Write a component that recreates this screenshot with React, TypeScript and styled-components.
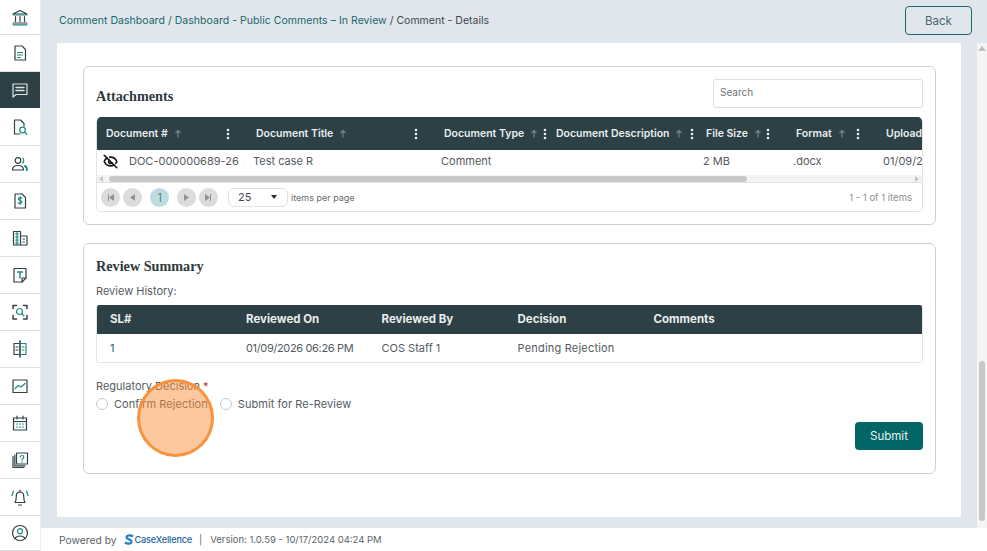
import React from "react";
import styled, { createGlobalStyle } from "styled-components";
import { EyeOff } from "lucide-react";

const Global = createGlobalStyle`
  html, body { margin: 0; padding: 0; height: 100%; overflow: hidden; background: #e1e6ed; }
  * { box-sizing: border-box; }
  body { font-family: Inter, "Noto Sans", "Liberation Sans", sans-serif; color: #4c5358; }
`;

const Page = styled.div`
  display: flex;
  width: 987px;
  height: 551px;
  position: relative;
  overflow: hidden;
`;
const Sidebar = styled.nav`
  width: 41px;
  flex: none;
  background: #fff;
  border-right: 1px solid #e9edf2;
  display: flex;
  flex-direction: column;
`;
const NavItem = styled.div<{ $active?: boolean; $h: number }>`
  height: ${(p) => p.$h}px;
  flex: none;
  display: flex;
  align-items: center;
  justify-content: center;
  background: ${(p) => (p.$active ? "#2d4045" : "#fff")};
  border-bottom: 1px solid ${(p) => (p.$active ? "#2d4045" : "#dcdfe2")};
`;
const Right = styled.div`
  flex: 1;
  min-width: 0;
  display: flex;
  flex-direction: column;
`;
const Header = styled.header`
  height: 43px;
  flex: none;
  display: flex;
  align-items: flex-start;
  justify-content: space-between;
  padding: 6px 15px 0 18px;
  background: #e1e6ed;
`;
const Crumbs = styled.div`
  font-size: 10.5px;
  line-height: 29px;
  color: #3f474e;
`;
const Crumb = styled.span`
  color: #17666a;
  letter-spacing: 0.04px;
`;
const BackButton = styled.button`
  width: 67px;
  height: 29px;
  font: inherit;
  font-size: 11.5px;
  color: #47686e;
  background: transparent;
  border: 1px solid #1c666c;
  border-radius: 4px;
  padding: 0;
`;
const Middle = styled.div`
  flex: 1;
  min-height: 0;
  display: flex;
  background: #e1e6ed;
`;
const Gutter = styled.div`
  flex: 1;
  min-width: 0;
  padding: 0 16px 11px 16px;
`;
const Panel = styled.main`
  height: 474px;
  background: #fff;
  padding: 23px 25px 0 26px;
  display: flex;
  flex-direction: column;
  gap: 18px;
`;
const ScrollTrack = styled.div`
  width: 10px;
  flex: none;
  background: #f5f5f5;
  display: flex;
  flex-direction: column;
  align-items: center;
  padding-top: 3px;
`;
const ScrollUp = styled.div`
  width: 0;
  height: 0;
  border-left: 4px solid transparent;
  border-right: 4px solid transparent;
  border-bottom: 5px solid #bdbdbd;
`;
const ScrollThumb = styled.div`
  width: 6px;
  height: 160px;
  margin-top: 310px;
  border-radius: 3px;
  background: #c8c8c8;
`;
const Card = styled.section<{ $h: number }>`
  height: ${(p) => p.$h}px;
  border: 1px solid #cfd2d4;
  border-radius: 6px;
  padding: 12px 12px 0 12px;
  flex: none;
`;
const CardTop = styled.div`
  display: flex;
  align-items: center;
  justify-content: space-between;
  margin-bottom: 9px;
`;
const Title = styled.h2<{ $drop?: number }>`
  margin: ${(p) => p.$drop ?? 0}px 0 0;
  font-family: "Liberation Serif", "DejaVu Serif", serif;
  font-weight: 700;
  font-size: 14.2px;
  line-height: 20px;
  color: #2e3a3e;
`;
const SearchBox = styled.input`
  width: 210px;
  height: 29px;
  border: 1px solid #dcdfe2;
  border-radius: 3px;
  font: inherit;
  font-size: 10px;
  padding: 0 6px 4px;
  background: #fff;
  &::placeholder { color: #6f7478; opacity: 1; }
`;
const GridWrap = styled.div`
  height: 95px;
  border: 1px solid #e1e4e6;
  border-top: 0;
  border-radius: 5px;
  overflow: hidden;
  display: flex;
  flex-direction: column;
`;
const GridHead = styled.div`
  height: 33px;
  flex: none;
  background: #2d4045;
  display: flex;
  color: #e8eeee;
  font-size: 10.5px;
  font-weight: 600;
`;
const HeadCell = styled.div<{ $w: number; $pr: number }>`
  width: ${(p) => p.$w}px;
  flex: none;
  display: flex;
  align-items: center;
  white-space: nowrap;
  padding-left: 9px;
  padding-right: ${(p) => p.$pr}px;
`;
const SortMark = styled.svg`
  width: 8px;
  height: 9px;
  margin-left: 6px;
  flex: none;
`;
const KebabMark = styled.svg`
  width: 4px;
  height: 12px;
  margin-left: auto;
  flex: none;
`;
const GridRow = styled.div`
  height: 25px;
  flex: none;
  display: flex;
  padding-bottom: 3px;
  font-size: 11px;
  color: #555b60;
`;
const RowCell = styled.div<{ $w: number }>`
  width: ${(p) => p.$w}px;
  flex: none;
  display: flex;
  align-items: center;
  white-space: nowrap;
  padding-left: 6px;
  gap: 11px;
`;
const HBar = styled.div`
  height: 8px;
  flex: none;
  background: #f3f3f3;
  border-bottom: 1px solid #dfe2e4;
  display: flex;
  align-items: center;
  justify-content: space-between;
  padding: 0 2px;
`;
const HThumb = styled.div`
  width: 638px;
  height: 6px;
  margin-left: 1px;
  margin-right: auto;
  border-radius: 3px;
  background: #c8c8c8;
`;
const Tri = styled.div<{ $dir: "l" | "r" }>`
  width: 0;
  height: 0;
  border-top: 3px solid transparent;
  border-bottom: 3px solid transparent;
  ${(p) => (p.$dir === "l" ? "border-right: 4px solid #c4c4c4; margin-right: 5px;" : "border-left: 4px solid #c4c4c4; margin-right: 1px;")}
`;
const Pager = styled.div`
  flex: 1;
  display: flex;
  align-items: center;
  padding: 0 10px 0 4px;
  gap: 3px;
  font-size: 9.5px;
  color: #666c70;
`;
const PageBtn = styled.div<{ $active?: boolean; $ml?: number }>`
  width: 19px;
  height: 19px;
  border-radius: 50%;
  margin-left: ${(p) => p.$ml ?? 0}px;
  background: ${(p) => (p.$active ? "#bcdcdf" : "#dcdcdc")};
  color: #4d6a70;
  font-size: 12px;
  font-weight: 300;
  display: flex;
  align-items: center;
  justify-content: center;
  flex: none;
`;
const PageGlyph = styled.svg`
  width: 7px;
  height: 7px;
`;
const PageSelect = styled.div`
  width: 60px;
  height: 19px;
  margin-left: 7px;
  border: 1px solid #dfe1e3;
  border-radius: 6px;
  display: flex;
  align-items: center;
  justify-content: space-between;
  padding: 0 10px 0 9px;
  font-size: 11px;
  color: #3f4548;
  flex: none;
`;
const SelectArrow = styled.div`
  width: 0;
  height: 0;
  border-left: 3.5px solid transparent;
  border-right: 3.5px solid transparent;
  border-top: 4px solid #2a2f33;
`;
const PerPage = styled.span`
  font-size: 9px;
`;
const PageCount = styled.span`
  margin-left: auto;
  color: #8b9094;
  font-size: 9.5px;
`;
const Small = styled.div`
  font-size: 11px;
  line-height: 14px;
  color: #565c61;
`;
const HistoryLabel = styled(Small)`
  margin-top: 8px;
`;
const History = styled.div`
  margin-top: 7px;
  height: 58px;
  border: 1px solid #e3e5e7;
  border-top: 0;
  border-radius: 3px;
  overflow: hidden;
`;
const HistoryHead = styled.div`
  height: 29px;
  padding-bottom: 1px;
  background: #2d4045;
  display: grid;
  grid-template-columns: 136px 135.5px 136px 136px 1fr;
  align-items: center;
  color: #e8eeee;
  font-size: 11.5px;
  font-weight: 700;
`;
const HistoryRow = styled.div`
  height: 29px;
  padding-bottom: 2px;
  display: grid;
  grid-template-columns: 136px 135.5px 136px 136px 1fr;
  align-items: center;
  font-size: 11px;
  color: #555b60;
`;
const HCell = styled.div<{ $track?: number }>`
  padding-left: 13px;
  white-space: nowrap;
  letter-spacing: ${(p) => p.$track ?? 0}px;
`;
const LinkCell = styled(HCell)`
  color: #17666a;
`;
const DecisionLabel = styled(Small)`
  margin-top: 16px;
`;
const Required = styled.span`
  color: #c0392b;
`;
const Radios = styled.div`
  margin-top: 4px;
  display: flex;
  align-items: center;
  height: 14px;
`;
const Radio = styled.span`
  width: 12px;
  height: 12px;
  border: 1px solid #c9cccf;
  border-radius: 50%;
  background: #fff;
  flex: none;
  margin-right: 6px;
`;
const RadioText = styled.span`
  font-size: 11px;
  letter-spacing: 0.05px;
  color: #565c61;
  margin-right: 12px;
  white-space: nowrap;
`;
const Actions = styled.div`
  margin-top: 11px;
  display: flex;
  justify-content: flex-end;
`;
const Submit = styled.button`
  width: 68px;
  height: 28px;
  border: 0;
  border-radius: 4px;
  background: #046566;
  color: #e9f4f4;
  font: inherit;
  font-size: 11.5px;
  padding: 0;
`;
const Footer = styled.footer`
  height: 23px;
  flex: none;
  background: #fff;
  display: flex;
  align-items: center;
  padding-left: 18px;
  font-size: 9.5px;
  color: #5c6266;
`;
const Powered = styled.span`
  font-size: 10.3px;
`;
const Logo = styled.span`
  display: inline-flex;
  align-items: center;
  margin: 0 7px;
  color: #1d5fa6;
  font-weight: 500;
  font-size: 9.2px;
  letter-spacing: -0.2px;
`;
const LogoMark = styled.svg`
  width: 10px;
  height: 11px;
  margin-right: 1px;
`;
const Sep = styled.span`
  margin-right: 8px;
`;
const Spot = styled.div`
  position: absolute;
  left: 137px;
  top: 379px;
  width: 77px;
  height: 78px;
  border-radius: 50%;
  background: rgba(251, 146, 60, 0.5);
  border: 3px solid #f8923c;
`;

const D = "#2f4247";
const T = "#1f8a80";

const Ico: React.FC<{ children: React.ReactNode }> = ({ children }) => (
  <svg width="20" height="20" viewBox="0 0 20 20" fill="none" stroke={D} strokeWidth="1.2" strokeLinecap="round" strokeLinejoin="round">
    {children}
  </svg>
);

const icons: React.ReactNode[] = [
  <Ico key="a"><path d="M3 7 10 3.5 17 7Z" /><path d="M3 8h14" stroke={T} /><path d="M5.5 9.5v5M10 9.5v5M14.5 9.5v5" /><path d="M3 16h14" /><path d="M3 17.8h14" stroke={T} /></Ico>,
  <Ico key="b"><path d="M5 3h7l3.5 3.5V17H5Z" /><path d="M7.5 9.500h5M7.500 12h5" stroke={T} /><path d="M7.500 14.500h3" stroke={T} /></Ico>,
  <Ico key="c"><g stroke="#dfe6e6"><path d="M3 4h14v10.500H6L3 17Z" /><path d="M6 7.500h8M6 10.500h8" strokeWidth="1.600" /></g></Ico>,
  <Ico key="d"><path d="M10 17H4.500V3h6l3.500 3.500V9" /><circle cx="12.500" cy="13" r="2.800" stroke={T} /><path d="m14.600 15 2.400 2.400" stroke={T} /></Ico>,
  <Ico key="e"><circle cx="8" cy="6.500" r="2.800" /><path d="M2.500 16c0-3 2.500-4.500 5.500-4.500s5.500 1.500 5.500 4.500Z" /><path d="M12.500 4c1.600.5 1.600 4.500 0 5" stroke={T} /><path d="M15 12c1.200.6 2 2 2 4" stroke={T} strokeWidth="2" /></Ico>,
  <Ico key="f"><path d="M5 3h7l3.500 3.500V17H5Z" /><path d="M12 7.200c-.5-1-3.600-1-3.600.7 0 2 3.600 1.200 3.600 3.200 0 1.700-3.200 1.700-3.800.6M10.200 5.500v8" stroke={T} /></Ico>,
  <Ico key="g"><path d="M3.500 17V3.500h7V17M10.500 8h6.500v9H3.500" /><path d="M5.500 6h3M5.500 9h3M5.500 12h3M5.500 15h3M7 4v13" stroke={T} /><path d="M13 11h1.500M13 14h1.500" /></Ico>,
  <Ico key="h"><path d="M4 3.500h12V13l-4 4H4Z" /><path d="M12 17v-4h4" /><path d="M7.500 7h5M10 7v6" stroke={T} strokeWidth="1.400" /></Ico>,
  <Ico key="i"><path d="M3 6.500V3.500h3.500M13.500 3.500H17v3M17 13.500V17h-3.500M6.500 17H3v-3.500" strokeWidth="1.500" /><circle cx="9.500" cy="9.500" r="3" stroke={T} /><path d="m11.700 11.700 2.300 2.300" stroke={T} /></Ico>,
  <Ico key="j"><path d="M10 2v16" strokeWidth="1.600" /><path d="M10 4.500H4v11h6M6 8h2M6 11h2" /><path d="M10 4.500h6v11h-6M12 8h2M12 11h2" stroke={T} /></Ico>,
  <Ico key="k"><path d="M3 4h14v12.500H3Z" /><path d="m5 12.500 3.500-3 2.500 1.500 4-3.500" stroke={T} /></Ico>,
  <Ico key="l"><path d="M3.500 5h13v12h-13Z" /><path d="M3.500 8.500h13M7 3v3M13 3v3" /><path d="M6.500 11h1M9.500 11h1M12.500 11h1M6.500 14h1M9.500 14h1M12.500 14h1" stroke={T} /></Ico>,
  <Ico key="m"><path d="M6.500 3h11v11h-11Z" /><path d="M3 6.500V17.500h11" /><path d="M4.800 5v10.800H15" /><path d="M10.200 7c.2-2 3.600-2 3.600 0 0 1.500-1.800 1.500-1.800 3M12 11.800v.4" stroke={T} /></Ico>,
  <Ico key="n"><path d="M5 15.500c1-1.500 1.300-3 1.300-6.500 0-2.500 1.500-4 3.700-4s3.700 1.500 3.700 4c0 3.500.3 5 1.300 6.500Z" /><path d="M8.500 18h3" /><path d="M10 3v2" /><path d="M3.500 4 2 8.500M16.500 4 18 8.500" stroke={T} /></Ico>,
  <Ico key="o"><circle cx="10" cy="10" r="7.500" /><circle cx="10" cy="8.200" r="2.500" stroke={T} /><path d="M5 15.500c1-2 3-2.500 5-2.500s4 .5 5 2.500" /></Ico>,
];

const heights = [35, 37, 36, 38, 37, 37, 37, 37, 37, 37, 37, 37, 37, 37, 35];

const Sort = () => (
  <SortMark viewBox="0 0 8 9" fill="none" stroke="#72868a" strokeWidth="1.2">
    <path d="M4 8.500V2M1.500 4 4 1.500 6.500 4" />
  </SortMark>
);
const Kebab = () => (
  <KebabMark viewBox="0 0 4 12" fill="#e8eeee">
    <circle cx="2" cy="2" r="1.300" />
    <circle cx="2" cy="6" r="1.300" />
    <circle cx="2" cy="10" r="1.300" />
  </KebabMark>
);

const columns = [
  { w: 150, pr: 17, label: "Document #", sort: true, value: "DOC-000000689-26" },
  { w: 188, pr: 17, label: "Document Title", sort: true, value: "Test case R" },
  { w: 112, pr: 0, label: "Document Type", sort: true, value: "Comment" },
  { w: 150, pr: 3, label: "Document Description", sort: true, value: "" },
  { w: 90, pr: 17, label: "File Size", sort: true, value: "2 MB" },
  { w: 90, pr: 17, label: "Format", sort: true, value: ".docx" },
  { w: 140, pr: 0, label: "Upload Date", sort: false, value: "01/09/2026" },
];

const glyph = (d: string) => (
  <PageGlyph viewBox="0 0 7 7" fill="#8f9294">
    <path d={d} />
  </PageGlyph>
);

export default function App() {
  return (
    <Page>
      <Global />
      <Sidebar>
        {icons.map((icon, i) => (
          <NavItem key={i} $h={heights[i]} $active={i === 2}>
            {icon}
          </NavItem>
        ))}
      </Sidebar>
      <Right>
        <Header>
          <Crumbs>
            <Crumb>Comment Dashboard / Dashboard - Public Comments – In Review</Crumb> / Comment - Details
          </Crumbs>
          <BackButton>Back</BackButton>
        </Header>
        <Middle>
          <Gutter>
            <Panel>
              <Card $h={159}>
                <CardTop>
                  <Title $drop={4}>Attachments</Title>
                  <SearchBox placeholder="Search" />
                </CardTop>
                <GridWrap>
                  <GridHead>
                    {columns.map((c) => (
                      <HeadCell key={c.label} $w={c.w} $pr={c.pr}>
                        {c.label}
                        {c.sort && <Sort />}
                        {c.sort && <Kebab />}
                      </HeadCell>
                    ))}
                  </GridHead>
                  <GridRow>
                    {columns.map((c, i) => (
                      <RowCell key={c.label} $w={c.w}>
                        {i === 0 && <EyeOff size={15} color="#111" strokeWidth={2.6} />}
                        {c.value}
                      </RowCell>
                    ))}
                  </GridRow>
                  <HBar>
                    <Tri $dir="l" />
                    <HThumb />
                    <Tri $dir="r" />
                  </HBar>
                  <Pager>
                    <PageBtn>{glyph("M1 0h1v7H1zM7 0v7L2 3.500z")}</PageBtn>
                    <PageBtn>{glyph("M6 0v7L1 3.500z")}</PageBtn>
                    <PageBtn $active $ml={5}>1</PageBtn>
                    <PageBtn $ml={5}>{glyph("M1 0v7l5-3.500z")}</PageBtn>
                    <PageBtn>{glyph("M0 0v7l5-3.500zM5 0h1v7H5z")}</PageBtn>
                    <PageSelect>
                      25
                      <SelectArrow />
                    </PageSelect>
                    <PerPage>items per page</PerPage>
                    <PageCount>1 - 1 of 1 items</PageCount>
                  </Pager>
                </GridWrap>
              </Card>
              <Card $h={231}>
                <Title>Review Summary</Title>
                <HistoryLabel>Review History:</HistoryLabel>
                <History>
                  <HistoryHead>
                    <HCell>SL#</HCell>
                    <HCell>Reviewed On</HCell>
                    <HCell>Reviewed By</HCell>
                    <HCell>Decision</HCell>
                    <HCell>Comments</HCell>
                  </HistoryHead>
                  <HistoryRow>
                    <LinkCell>1</LinkCell>
                    <HCell $track={-0.35}>01/09/2026 06:26 PM</HCell>
                    <HCell>COS Staff 1</HCell>
                    <HCell $track={0.2}>Pending Rejection</HCell>
                    <HCell />
                  </HistoryRow>
                </History>
                <DecisionLabel>
                  Regulatory Decision <Required>*</Required>
                </DecisionLabel>
                <Radios>
                  <Radio />
                  <RadioText>Confirm Rejection</RadioText>
                  <Radio />
                  <RadioText>Submit for Re-Review</RadioText>
                </Radios>
                <Actions>
                  <Submit>Submit</Submit>
                </Actions>
              </Card>
            </Panel>
          </Gutter>
          <ScrollTrack>
            <ScrollUp />
            <ScrollThumb />
          </ScrollTrack>
        </Middle>
        <Footer>
          <Powered>Powered by</Powered>
          <Logo>
            <LogoMark viewBox="0 0 10 11" fill="none" stroke="#1d7fc4" strokeWidth="2.200">
              <path d="M9 2.500C7 1 3 1 2.500 3c-.5 2.500 5.500 2 5 5-.4 2-4.500 2-6.500.5" />
            </LogoMark>
            CaseXellence
          </Logo>
          <Sep>|</Sep>
          Version: 1.0.59 - 10/17/2024 04:24 PM
        </Footer>
      </Right>
      <Spot />
    </Page>
  );
}
